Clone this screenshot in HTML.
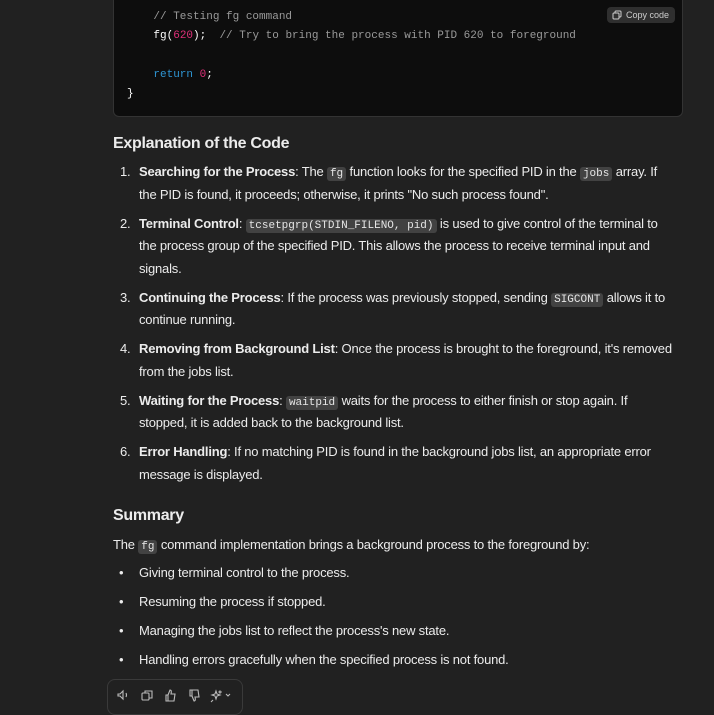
<!DOCTYPE html>
<html><head><style>
body{margin:0;background:#212121;width:714px;height:704px;overflow:hidden;font-family:"Liberation Sans",sans-serif;color:#ececec;position:relative}
.code{position:absolute;left:113px;top:-8px;width:568px;height:123px;background:#0d0d0d;border:1px solid #333;border-radius:6px}
.code pre{margin:0;position:absolute;left:13px;top:15px;font:11px/19.3px "Liberation Mono",monospace;color:#fff}
.c{color:#9a9a9a}.n{color:#df3079}.k{color:#2e95d3}
.copy{position:absolute;right:7px;top:14px;background:#2f2f2f;border-radius:4px;font-size:9px;color:#cdcdcd;padding:3px 6px 3px 5px;display:flex;align-items:center;gap:4px}
.t{position:absolute;left:113px;width:564px;font-size:13px;letter-spacing:-0.2px}
h3{margin:0;font-size:16px;font-weight:bold;letter-spacing:-0.3px}
ol{margin:0;padding:0;list-style:none}
li{position:relative;padding-left:26px;line-height:22.5px;margin-bottom:6.5px}
.num{position:absolute;left:7px}
code{font:11px "Liberation Mono",monospace;background:#424242;border-radius:3px;padding:1px 3px;letter-spacing:0;color:#e6e6e6}
b{font-weight:bold}
.bul{position:absolute;left:6px;top:0}
.bar{position:absolute;left:107px;top:679px;width:134px;height:34px;border:1px solid #3a3a3a;border-radius:8px}
</style></head><body>
<div class="code">
<pre>    <span class="c">// Testing fg command</span>
    fg(<span class="n">620</span>);  <span class="c">// Try to bring the process with PID 620 to foreground</span>

    <span class="k">return</span> <span class="n">0</span>;
}</pre>
<div class="copy"><svg width="10" height="10" viewBox="0 0 10 10" fill="none" stroke="#cdcdcd" stroke-width="1"><rect x="1" y="3" width="6" height="6" rx="1"/><path d="M3 3V2a1 1 0 011-1h4a1 1 0 011 1v4a1 1 0 01-1 1H7"/></svg>Copy code</div>
</div>
<div class="t" style="top:135px"><h3>Explanation of the Code</h3></div>
<div class="t" style="top:161px"><ol>
<li><span class="num">1.</span><b>Searching for the Process</b>: The <code>fg</code> function looks for the specified PID in the <code>jobs</code> array. If<br>the PID is found, it proceeds; otherwise, it prints "No such process found".</li>
<li><span class="num">2.</span><b>Terminal Control</b>: <code>tcsetpgrp(STDIN_FILENO, pid)</code> is used to give control of the terminal to<br>the process group of the specified PID. This allows the process to receive terminal input and<br>signals.</li>
<li><span class="num">3.</span><b>Continuing the Process</b>: If the process was previously stopped, sending <code>SIGCONT</code> allows it to<br>continue running.</li>
<li><span class="num">4.</span><b>Removing from Background List</b>: Once the process is brought to the foreground, it's removed<br>from the jobs list.</li>
<li><span class="num">5.</span><b>Waiting for the Process</b>: <code>waitpid</code> waits for the process to either finish or stop again. If<br>stopped, it is added back to the background list.</li>
<li><span class="num">6.</span><b>Error Handling</b>: If no matching PID is found in the background jobs list, an appropriate error<br>message is displayed.</li>
</ol></div>
<div class="t" style="top:507px"><h3>Summary</h3></div>
<div class="t" style="top:534px;line-height:22px">The <code>fg</code> command implementation brings a background process to the foreground by:</div>
<div class="t" style="top:562px"><ol>
<li><span class="bul">•</span>Giving terminal control to the process.</li>
<li><span class="bul">•</span>Resuming the process if stopped.</li>
<li><span class="bul">•</span>Managing the jobs list to reflect the process's new state.</li>
<li><span class="bul">•</span>Handling errors gracefully when the specified process is not found.</li>
</ol></div>
<div class="bar">
<svg width="134" height="24" viewBox="0 0 134 24" fill="none" stroke="#bbb" stroke-width="1.1" style="position:absolute;left:0;top:3px">
<path d="M10 11h2l3-3v8l-3-3h-2z M18 10q1 2 0 4"/>
<rect x="34" y="10" width="7" height="7" rx="1"/><path d="M37 10V8h7v7h-3"/>
<path d="M58 12h2v6h-2z M60 12l2-5q2 0 1 4h4l-1 7h-6"/>
<path d="M82 7h2v6h-2z M84 13l2 5q2 0 1-4h4l-1-7h-6"/>
<path d="M108 8l1 3 3 1-3 1-1 3-1-3-3-1 3-1z M105 17l-2 2 M112 8a1 1 0 100.1 0 M118 11l2 2 2-2"/>
</svg></div>
</body></html>
